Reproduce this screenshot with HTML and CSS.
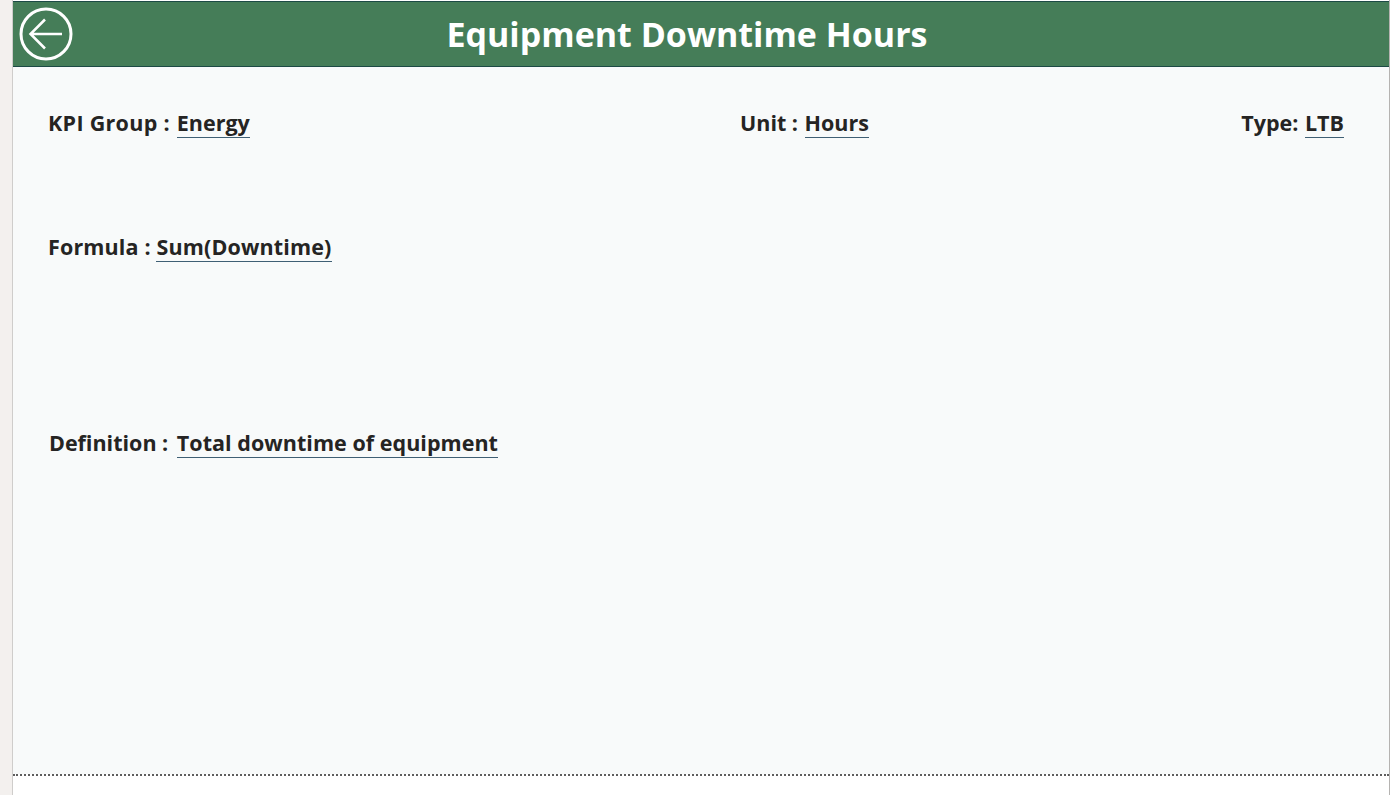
FILE: index.html
```html
<!DOCTYPE html>
<html lang="en">
<head>
<meta charset="utf-8">
<title>Equipment Downtime Hours</title>
<link rel="stylesheet" href="styles.css">
</head>
<body>
<div class="page">
  <div class="rail"></div>
  <main class="sheet">
    <header class="banner">
      <a class="back" aria-label="Back">
        <svg viewBox="0 0 54 54" width="54" height="54" fill="none" stroke="#fff" stroke-width="3">
          <circle cx="27" cy="27" r="25"/>
          <path d="M43 27H11.500M26 12.500L11.500 27 26 41.500" stroke-width="2.500"/>
        </svg>
      </a>
      <h1 class="title">Equipment Downtime Hours</h1>
    </header>
    <section class="body">
      <div class="meta">
        <p class="field kpi">KPI Group : <span class="value">Energy</span></p>
        <p class="field">Unit : <span class="value">Hours</span></p>
        <p class="field">Type: <span class="value">LTB</span></p>
      </div>
      <p class="field formula">Formula : <span class="value">Sum(Downtime)</span></p>
      <p class="field definition">Definition : <span class="value">Total downtime of equipment</span></p>
    </section>
    <div class="foot"></div>
  </main>
</div>
</body>
</html>
```
FILE: styles.css
```css
* { box-sizing: border-box; }
html, body { margin: 0; height: 100%; background: #fff; overflow: hidden; }
body { font-family: "Open Sans", "Noto Sans", sans-serif; color: #252423; }
.page { display: flex; height: 795px; width: 1392px; }
.rail { width: 12px; background: #f3f0ee; flex: none; }
.sheet {
  width: 1378px;
  flex: none;
  display: flex;
  flex-direction: column;
  padding-top: 1px;
  border-left: 1px solid #cfcdcb;
  border-right: 1px solid #b5b3b1;
}
.banner {
  height: 66px;
  flex: none;
  background: #457d58;
  border-top: 1px solid #1c4a45;
  border-bottom: 1px solid #1c4a45;
  display: flex;
  align-items: center;
  position: relative;
}
.back {
  position: absolute;
  left: 6px;
  top: 5px;
  width: 54px;
  height: 54px;
  display: block;
}
.back svg { display: block; }
.title {
  margin: 0;
  width: 100%;
  text-align: center;
  color: #fff;
  font-size: 34px;
  font-weight: 700;
  line-height: 66px;
  padding-right: 28px;
}
.body {
  flex: 1;
  background: #f8fafa;
  padding: 42px 45px 0 35px;
  display: flex;
  flex-direction: column;
}
.meta {
  display: grid;
  grid-template-columns: 692px 1fr auto;
}
.field {
  margin: 0;
  font-size: 21.500px;
  font-weight: 700;
  line-height: 28px;
}
.value {
  display: inline-block;
  margin-left: 1px;
  padding-bottom: 1px;
  border-bottom: 1px solid #3f5f74;
  line-height: 27px;
}
.kpi { letter-spacing: 0.300px; }
.kpi .value { letter-spacing: 0; }
.formula { margin-top: 95px; letter-spacing: 0.150px; }
.formula .value { margin-left: 0; }
.definition { margin-top: 167px; margin-left: 1px; }
.definition .value { margin-left: 3px; letter-spacing: 0.040px; }
.foot {
  height: 21px;
  flex: none;
  background: #fff;
  border-top: 2px dotted #5e5e5e;
}
```
